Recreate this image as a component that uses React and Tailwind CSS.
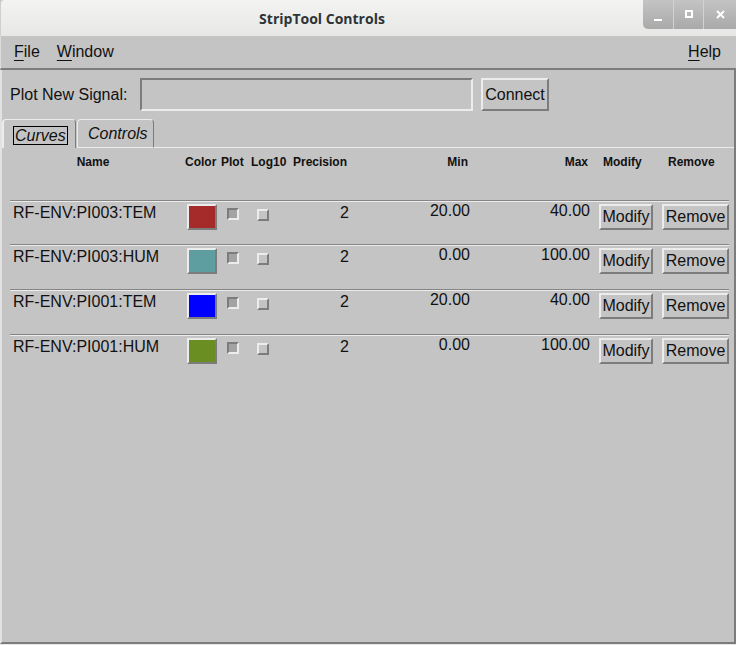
import React from "react";

const curves = [
  { name: "RF-ENV:PI003:TEM", color: "bg-[#a52a2a]", min: "20.00", max: "40.00", h: "h-[44px]" },
  { name: "RF-ENV:PI003:HUM", color: "bg-[#5f9ea0]", min: "0.00", max: "100.00", h: "h-[45px]" },
  { name: "RF-ENV:PI001:TEM", color: "bg-[#0000ff]", min: "20.00", max: "40.00", h: "h-[45px]" },
  { name: "RF-ENV:PI001:HUM", color: "bg-[#6b8e23]", min: "0.00", max: "100.00", h: "h-[45px]" },
];

// motif style 3d borders
const raised = "border-2 border-t-[#ececec] border-l-[#ececec] border-b-[#7c7c7c] border-r-[#7c7c7c]";
const sunken = "border-2 border-t-[#7c7c7c] border-l-[#7c7c7c] border-b-[#ececec] border-r-[#ececec]";

const Mnemonic = ({ first, rest }) => (
  <span>
    <span className="underline underline-offset-[3px] decoration-1">{first}</span>
    {rest}
  </span>
);

const Button = ({ label, className }) => (
  <div className={`${raised} ${className} flex items-center justify-center text-[16px] leading-[18px] text-[#111]`}>
    {label}
  </div>
);

const TitleButtons = () => (
  <div className="self-start flex h-[29px] w-[93px] rounded-bl-[5px] overflow-hidden bg-gradient-to-b from-[#c4c4c4] to-[#a9a9a9]">
    <div className="w-[31px] flex items-center justify-center border-r border-r-[#d2d2d2]">
      <svg width="8" height="8" viewBox="0 0 8 8" className="mt-[4px]">
        <rect x="0" y="6" width="8" height="2" fill="#fff" />
      </svg>
    </div>
    <div className="w-[30px] flex items-center justify-center border-r border-r-[#d2d2d2]">
      <svg width="8" height="8" viewBox="0 0 8 8" className="-mt-[1px]">
        <rect x="1" y="1" width="6" height="6" fill="none" stroke="#fff" strokeWidth="2" />
      </svg>
    </div>
    <div className="flex-1 flex items-center justify-center">
      <svg width="9" height="9" viewBox="0 0 9 9" className="-mt-[1px]">
        <path d="M1 1 L8 8 M8 1 L1 8" stroke="#fff" strokeWidth="2" />
      </svg>
    </div>
  </div>
);

const App = () => {
  return (
    <div className="w-[736px] h-[645px] flex flex-col bg-[#c4c4c4] overflow-hidden font-['Liberation_Sans',Arial,sans-serif] text-[#111]">
      {/* title bar */}
      <div className="h-[36px] shrink-0 flex bg-gradient-to-b from-[#f3f3f2] to-[#e7e7e6] border-l border-l-[#cfcfcf] rounded-tl-[4px]">
        <div className="flex-1 flex items-center justify-center font-['Open_Sans',sans-serif] font-bold text-[14px] text-[#2e3436]">
          StripTool Controls
        </div>
        <TitleButtons />
      </div>

      {/* menu bar */}
      <div className="h-[34px] shrink-0 flex items-center px-[13px] text-[16px] border-b-2 border-b-[#7c7c7c] border-l border-l-[#dcdcdc]">
        <Mnemonic first="F" rest="ile" />
        <span className="ml-[17px]">
          <Mnemonic first="W" rest="indow" />
        </span>
        <span className="ml-auto mr-[2px]">
          <Mnemonic first="H" rest="elp" />
        </span>
      </div>

      {/* content */}
      <div className="flex-1 flex flex-col border-l-2 border-l-[#e2e2e2] border-r-2 border-r-[#7c7c7c] border-b-2 border-b-[#7c7c7c]">
        {/* signal entry */}
        <div className="mt-[8px] flex items-center h-[33px]">
          <div className="w-[138px] pl-[8px] text-[16px]">Plot New Signal:</div>
          <div className={`${sunken} w-[333px] h-[33px]`} />
          <Button label="Connect" className="ml-[8px] w-[68px] h-[33px]" />
        </div>

        {/* tabs */}
        <div className="mt-[8px] flex h-[29px] items-stretch">
          <div className="w-[74px] border-t border-l-2 border-t-[#ececec] border-l-[#ececec] border-r border-r-[#7c7c7c] rounded-t-[4px] pt-[4px] pl-[9px]">
            <span className="inline-block border border-black px-[1px] h-[19px] leading-[17px] italic text-[16px]">Curves</span>
          </div>
          <div className="w-[77px] ml-[1px] border-t border-l border-t-[#ececec] border-l-[#ececec] border-r border-r-[#7c7c7c] border-b border-b-[#ececec] rounded-t-[4px] pt-[5px] pl-[10px] italic text-[16px] leading-[17px]">
            Controls
          </div>
          <div className="flex-1 border-b border-b-[#ececec]" />
        </div>

        {/* header */}
        <div className="h-[52px] ml-[8px] pt-[7px] flex text-[12px] leading-[15px] font-bold">
          <div className="w-[166px] text-center">Name</div>
          <div className="ml-[9px] w-[36px]">Color</div>
          <div className="w-[30px]">Plot</div>
          <div className="w-[42px]">Log10</div>
          <div className="w-[100px]">Precision</div>
          <div className="w-[75px] text-right">Min</div>
          <div className="w-[120px] text-right">Max</div>
          <div className="ml-[15px] w-[65px]">Modify</div>
          <div>Remove</div>
        </div>

        {/* curve rows */}
        {curves.map((c) => (
          <div key={c.name} className={`${c.h} ml-[8px] w-[719px] flex flex-col`}>
            <div className="h-[2px] border-t border-t-[#858585] border-b border-b-[#ececec]" />
            <div className="flex items-start text-[16px] leading-[18px]">
              <div className="w-[177px] pl-[3px] pt-[2px]">{c.name}</div>
              <div className={`${raised} ${c.color} mt-[2px] w-[30px] h-[26px]`} />
              <div className={`${sunken} bg-[#a3a3a3] ml-[10px] mt-[6px] w-[12px] h-[12px]`} />
              <div className={`${raised} ml-[18px] mt-[7px] w-[12px] h-[12px]`} />
              <div className="w-[80px] pt-[2px] text-right">2</div>
              <div className="w-[121px] text-right">{c.min}</div>
              <div className="w-[120px] text-right">{c.max}</div>
              <Button label="Modify" className="ml-[9px] mt-[2px] w-[54px] h-[26px]" />
              <Button label="Remove" className="ml-[9px] mt-[2px] w-[67px] h-[26px]" />
            </div>
          </div>
        ))}
        <div className="flex-1" />
      </div>
      <div className="h-[1px] shrink-0 bg-[#e6e6e6]" />
    </div>
  );
};

export default App;
